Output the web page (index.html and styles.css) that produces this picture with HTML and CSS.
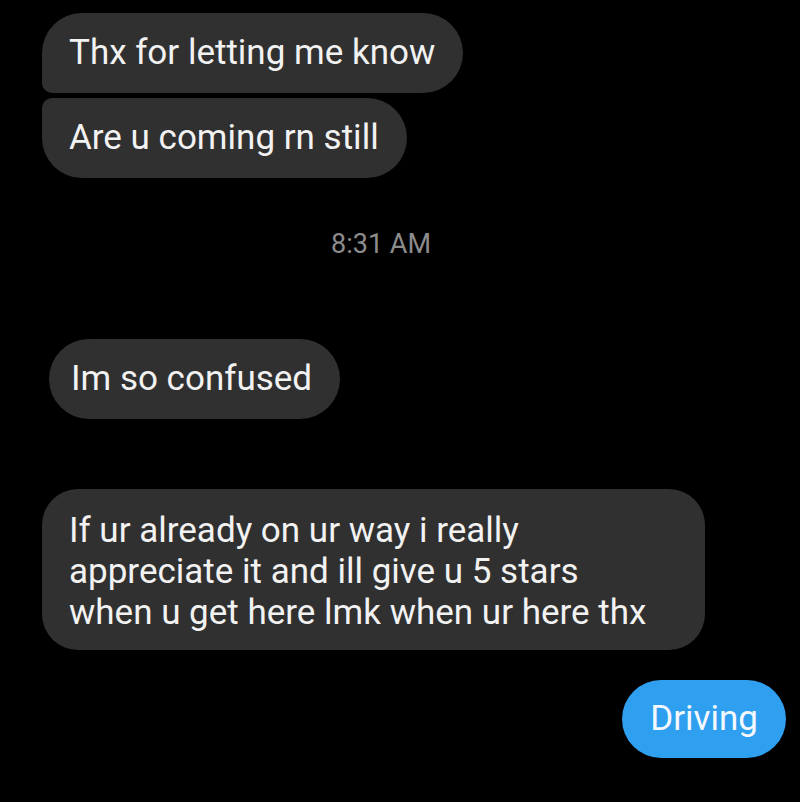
FILE: index.html
```html
<!DOCTYPE html>
<html>
<head>
<meta charset="utf-8">
<link rel="stylesheet" href="styles.css">
</head>
<body>
<div class="chat">
  <div class="bubble in first">Thx for letting me know</div>
  <div class="bubble in last">Are u coming rn still</div>
  <div class="time">8:31 AM</div>
  <div class="bubble in single">Im so confused</div>
  <div class="bubble in multi">If ur already on ur way i really<br>appreciate it and ill give u 5 stars<br>when u get here lmk when ur here thx</div>
  <div class="bubble out">Driving</div>
</div>
</body>
</html>
```
FILE: styles.css
```css
html, body {
  margin: 0;
  padding: 0;
  background: #000;
  height: 100%;
}
.chat {
  display: flex;
  flex-direction: column;
  align-items: flex-start;
  padding: 13px 14px 0 42px;
  font-family: Roboto, "Noto Sans", sans-serif;
  color: #f2f2f2;
}
.bubble {
  box-sizing: border-box;
  font-size: 35px;
  line-height: 40px;
  padding: 20px 28px 20px 27px;
  background: #303030;
  border-radius: 40px;
}
.first {
  border-radius: 40px 40px 40px 10px;
}
.last {
  margin-top: 5px;
  border-radius: 10px 40px 40px 40px;
}
.time {
  align-self: center;
  margin: 48px 66px 0 0;
  font-size: 27px;
  line-height: 36px;
  color: #8c8c8c;
}
.single {
  margin-top: 77px;
  margin-left: 7px;
  padding-left: 22px;
}
.multi {
  margin-top: 70px;
  width: 663px;
  border-radius: 36px;
  font-size: 35px;
  line-height: 41px;
  padding: 21px 27px 17px;
}
.out {
  align-self: flex-end;
  margin-top: 30px;
  background: #2f9ff0;
  color: #f4f8fc;
  padding: 19px 28px;
}
```
